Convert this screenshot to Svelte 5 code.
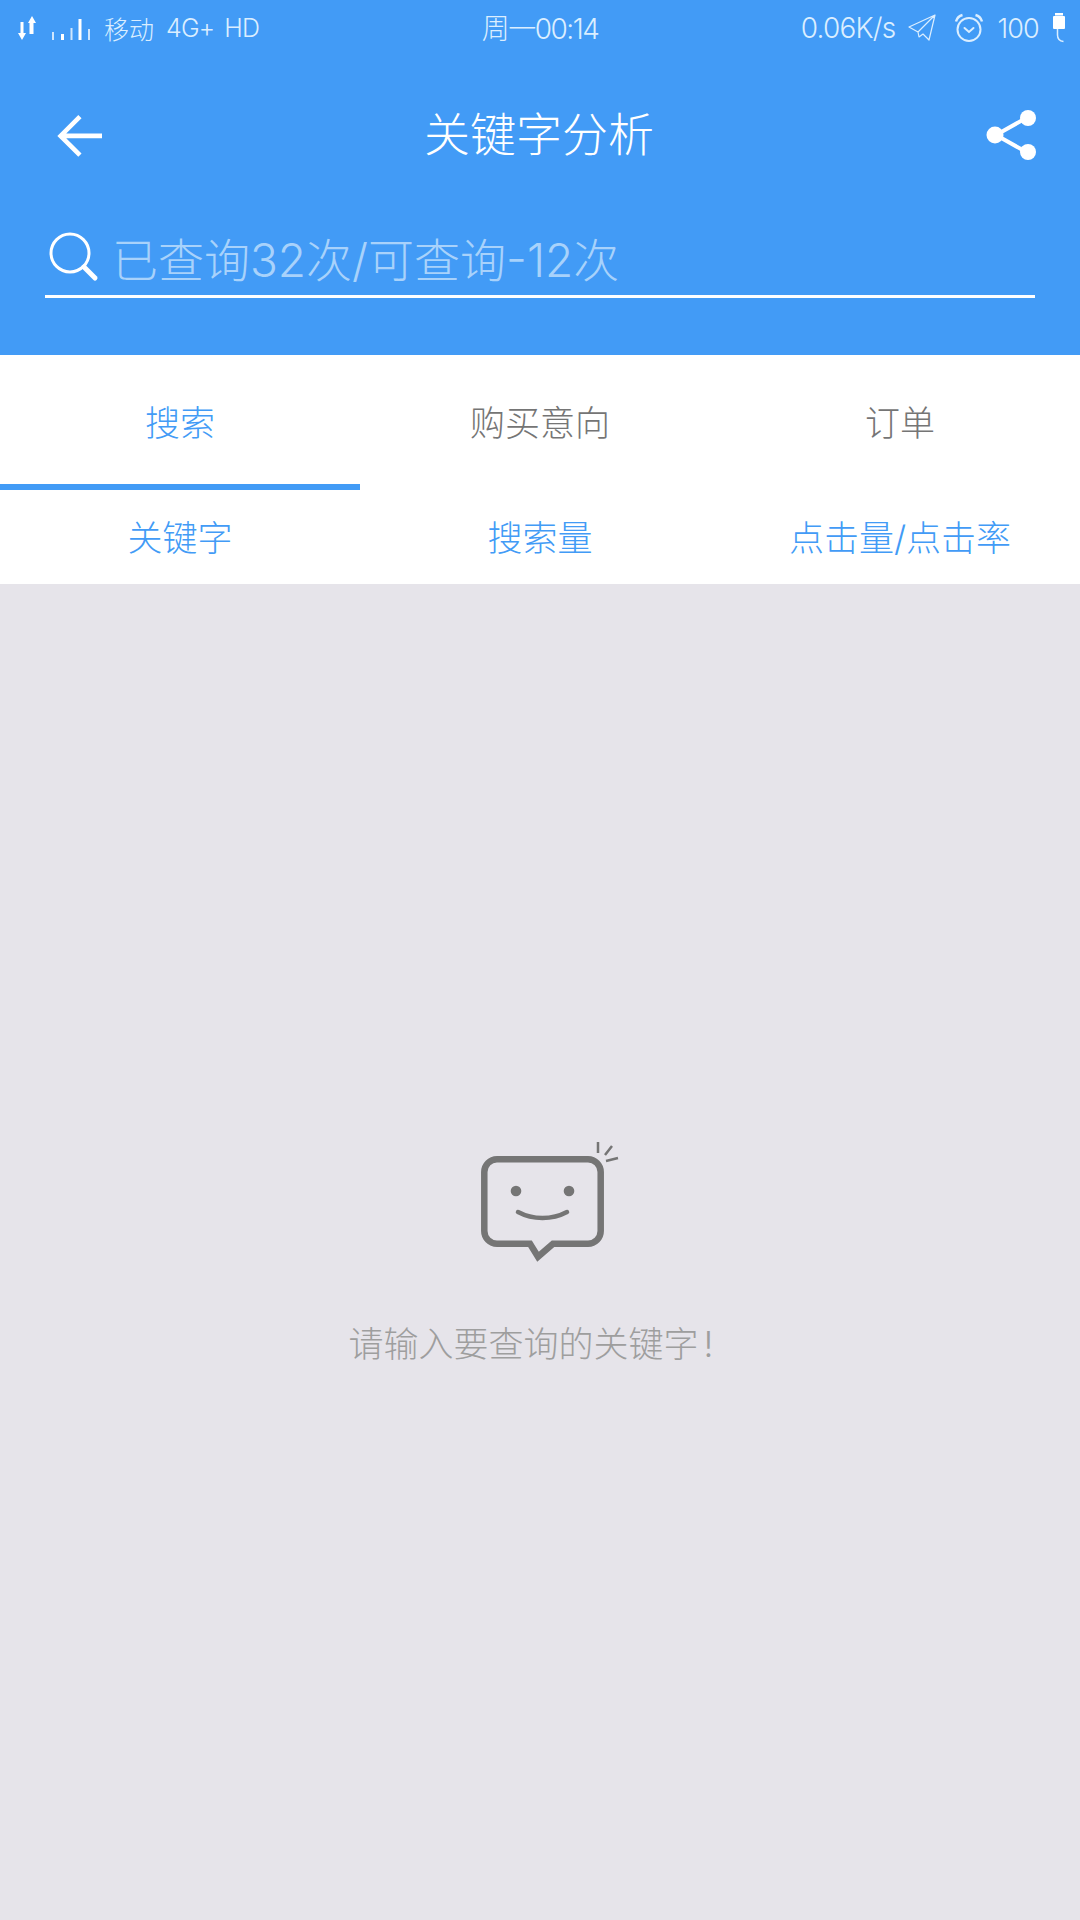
<script lang="ts">
	const tabs = ['搜索', '购买意向', '订单'];
	const columns = ['关键字', '搜索量', '点击量/点击率'];
	let active = 0;
</script>

<div class="page">
	<header class="top">
		<div class="status">
			<div class="status-left">
				<svg class="updown" width="20" height="26" viewBox="0 0 20 26" fill="#fff">
					<path d="M2.500 7h3v11H8L4 25 0 18h2.500z"/>
					<path d="M11.500 19V8H10L14 1l4 7h-2.500v11z"/>
				</svg>
				<svg class="signal" width="38" height="24" viewBox="0 0 38 24" fill="#fff">
					<rect x="0" y="16" width="2" height="8" opacity=".75"/>
					<rect x="9" y="18" width="3" height="6"/>
					<rect x="18.500" y="12" width="2" height="12" opacity=".75"/>
					<rect x="26.500" y="3" width="3" height="21"/>
					<rect x="36" y="13" width="2" height="11" opacity=".75"/>
				</svg>
				<span class="carrier">移动</span>
				<span class="net">4G+</span>
				<span class="net">HD</span>
			</div>
			<div class="clock">周一00:14</div>
			<div class="status-right">
				<span class="speed">0.06K/s</span>
				<svg class="plane" width="28" height="28" viewBox="0 0 28 28" fill="none" stroke="#dbeeff" stroke-width="1.200" stroke-linejoin="round">
					<path d="M27 1 1 13l9 5zM27 1 10 18l1 5 4-3 6 6z"/>
				</svg>
				<svg class="alarm" width="30" height="30" viewBox="0 0 30 30" fill="none" stroke="#dbeeff" stroke-width="2">
					<circle cx="15" cy="16.500" r="11.500"/>
					<path d="M10.500 15l4.500 4 4.500-4" stroke-linecap="round"/>
					<path d="M2 8.500C3 5 5.500 2.800 8.500 2M28 8.500C27 5 24.500 2.800 21.500 2" stroke-width="2.500"/>
				</svg>
				<span class="level">100</span>
				<svg class="battery" width="14" height="30" viewBox="0 0 14 30" fill="#fff">
					<rect x="3" y="0" width="8" height="2.500"/>
					<rect x="1" y="3" width="12" height="13" rx="1"/>
					<path d="M5.500 16v6c0 3.500 2 6 6 6.500" fill="none" stroke="#dbeeff" stroke-width="1.500"/>
				</svg>
			</div>
		</div>

		<div class="toolbar">
			<svg class="back" width="48" height="48" viewBox="0 0 48 48" fill="none" stroke="#fff" stroke-width="5">
				<path d="M26 3 5 24l21 21M5 24h45" transform="translate(1 0) scale(.92 .92) translate(0 2)"/>
			</svg>
			<h1>关键字分析</h1>
			<div class="share-cell">
				<svg width="52" height="52" viewBox="0 0 52 52" fill="#fff">
					<path d="M10 26 42 8M10 26l32 18" stroke="#fff" stroke-width="4"/>
					<circle cx="9" cy="26" r="8.500"/>
					<circle cx="42" cy="9" r="8"/>
					<circle cx="42" cy="43" r="8"/>
				</svg>
			</div>
		</div>

		<div class="search">
			<svg width="52" height="52" viewBox="0 0 52 52" fill="none" stroke="#fff">
				<circle cx="23" cy="22" r="19" stroke-width="3"/>
				<path d="M37 36l11 11" stroke-width="5" stroke-linecap="round"/>
			</svg>
			<span>已查询32次/可查询-12次</span>
		</div>
	</header>

	<nav class="tabs">
		{#each tabs as tab, i}
			<div class="tab" class:active={i === active}>{tab}</div>
		{/each}
	</nav>

	<div class="columns">
		{#each columns as col}
			<div>{col}</div>
		{/each}
	</div>

	<main class="empty">
		<svg class="smile" width="144" height="126" viewBox="478 1140 144 126" fill="none" stroke="#757575">
			<path d="M497 1159.300H588a12.700 12.700 0 0 1 12.700 12.700v59a12.700 12.700 0 0 1-12.700 12.700H553l-15 13-8-13H497a12.700 12.700 0 0 1-12.700-12.700v-59a12.700 12.700 0 0 1 12.700-12.700z" stroke-width="6.500"/>
			<circle cx="516" cy="1191" r="5.300" fill="#757575" stroke="none"/>
			<circle cx="569" cy="1191" r="5.300" fill="#757575" stroke="none"/>
			<path d="M518 1212c15 8 34 8 49 0" stroke-width="4.500" stroke-linecap="round"/>
			<path d="M598 1142v11M612 1146l-7 9M618 1158l-12 3" stroke-width="2.500"/>
		</svg>
		<p>请输入要查询的关键字<span class="bang">!</span></p>
	</main>
</div>

<style>
	:global(body) {
		margin: 0;
		background: #e6e4ea;
	}

	.page {
		width: 1080px;
		height: 1920px;
		display: flex;
		flex-direction: column;
		font-family: 'Inter', 'Noto Sans CJK SC', sans-serif;
		font-weight: 300;
		background: #e6e4ea;
	}

	.top {
		height: 355px;
		background: #429bf6;
		color: #fff;
		display: flex;
		flex-direction: column;
	}

	.status {
		height: 56px;
		padding: 0 14px 0 18px;
		display: grid;
		grid-template-columns: 1fr auto 1fr;
		align-items: center;
		color: #dbeeff;
		font-size: 28px;
		letter-spacing: -0.8px;
	}

	.status-left {
		display: flex;
		align-items: center;
	}

	.status-right {
		display: flex;
		align-items: center;
		justify-content: flex-end;
	}

	.updown {
		margin-right: 14px;
	}

	.signal {
		margin-right: 14px;
	}

	.carrier {
		font-size: 25px;
		letter-spacing: 0;
		margin-right: 12px;
	}

	.net {
		font-size: 25px;
		margin-right: 10px;
	}

	.clock {
		font-size: 28px;
		letter-spacing: -1.500px;
		margin: 0 0 2px -4px;
	}

	.plane {
		margin: 0 18px 0 13px;
	}

	.alarm {
		margin-right: 13px;
	}

	.level {
		font-size: 27px;
	}

	.battery {
		margin-left: 13px;
	}

	.toolbar {
		height: 156px;
		padding: 0 42px 0 40px;
		display: grid;
		grid-template-columns: 1fr auto 1fr;
		align-items: center;
	}

	.back {
		margin: 4px 0 0 15px;
	}

	.toolbar h1 {
		margin: 0 0 6px;
		font-size: 46px;
		font-weight: 300;
	}

	.share-cell {
		display: flex;
		justify-content: flex-end;
		margin-top: 2px;
	}

	.search {
		margin: 12px 45px 0;
		height: 66px;
		padding: 0 0 5px 2px;
		border-bottom: 3px solid #fff;
		display: flex;
		align-items: center;
		gap: 13px;
		font-size: 46px;
		color: #a8d2fb;
	}

	.tabs {
		height: 135px;
		background: #fff;
		display: grid;
		grid-template-columns: repeat(3, 1fr);
	}

	.tab {
		display: flex;
		align-items: center;
		justify-content: center;
		padding-top: 2px;
		font-size: 35px;
		color: #757575;
		border-bottom: 6px solid transparent;
	}

	.tab.active {
		color: #429bf6;
		border-bottom-color: #429bf6;
	}

	.columns {
		height: 94px;
		padding-bottom: 4px;
		box-sizing: border-box;
		background: #fff;
		display: grid;
		grid-template-columns: repeat(3, 1fr);
		align-items: center;
		text-align: center;
		font-size: 35px;
		color: #429bf6;
	}

	.empty {
		flex: 1;
		display: flex;
		flex-direction: column;
		align-items: center;
		padding-top: 556px;
	}

	.smile {
		margin-left: 20px;
	}

	.empty p {
		margin: 50px 18px 0 0;
		font-size: 35px;
		color: #9e9e9e;
	}

	.bang {
		margin-left: 5px;
	}
</style>
